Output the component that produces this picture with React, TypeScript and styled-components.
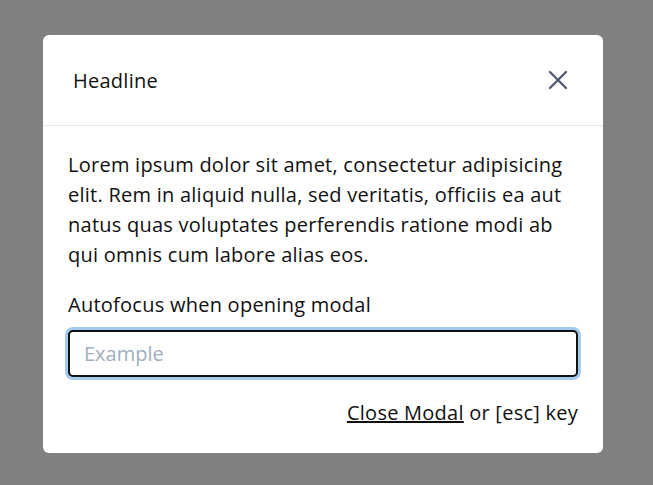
import React from "react";
import styled, { createGlobalStyle } from "styled-components";

const Global = createGlobalStyle`
  html, body { margin: 0; padding: 0; }
  body {
    background: #808080;
    font-family: "Open Sans", "Noto Sans", sans-serif;
    color: #111;
  }
  * { box-sizing: border-box; }
`;

const Backdrop = styled.div`
  min-height: 100vh;
  display: flex;
  align-items: flex-start;
  justify-content: flex-start;
  padding: 35px 0 0 43px;
`;

const Dialog = styled.div`
  width: 560px;
  background: #fff;
  border-radius: 6px;
  display: flex;
  flex-direction: column;
`;

const Header = styled.div`
  height: 91px;
  display: flex;
  align-items: center;
  justify-content: space-between;
  padding: 0 34px 0 30px;
  border-bottom: 1px solid #e2e8f0;
`;

const Title = styled.h2`
  margin: 0;
  font-size: 20px;
  letter-spacing: 0.25px;
  font-weight: 400;
  color: #111;
`;

const CloseButton = styled.button`
  border: none;
  background: none;
  padding: 0;
  width: 22px;
  height: 22px;
  display: flex;
  align-items: center;
  justify-content: center;
  color: #4a5568;
  cursor: pointer;
`;

const Body = styled.div`
  padding: 24px 25px 25px 25px;
  display: flex;
  flex-direction: column;
`;

const Text = styled.p`
  margin: 0 0 20px;
  font-size: 20px;
  line-height: 30px;
  letter-spacing: 0.25px;
`;

const Label = styled.label`
  font-size: 20px;
  line-height: 30px;
  letter-spacing: 0.25px;
  margin-bottom: 10px;
`;

const Input = styled.input`
  width: 100%;
  height: 47px;
  border: 2px solid #111;
  border-radius: 5px;
  padding: 0 14px;
  font-family: inherit;
  font-size: 20px;
  color: #111;
  outline: none;
  box-shadow: 0 0 0 3px #a4cbef;
  &::placeholder { color: #a0aec0; }
`;

const Footer = styled.div`
  margin-top: 21px;
  text-align: right;
  font-size: 20px;
  line-height: 30px;
  letter-spacing: 0.25px;
`;

const CloseLink = styled.a`
  color: #111;
  text-decoration: underline;
  cursor: pointer;
`;

export default function App() {
  return (
    <>
      <Global />
      <Backdrop>
        <Dialog role="dialog" aria-labelledby="modal-title">
          <Header>
            <Title id="modal-title">Headline</Title>
            <CloseButton aria-label="Close">
              <svg width="20" height="20" viewBox="0 0 20 20" fill="none" stroke="currentColor" strokeWidth="2.2" strokeLinecap="round">
                <path d="M2 2 L18 18 M18 2 L2 18" />
              </svg>
            </CloseButton>
          </Header>
          <Body>
            <Text>
              Lorem ipsum dolor sit amet, consectetur adipisicing elit. Rem in aliquid nulla, sed veritatis, officiis ea aut natus quas voluptates perferendis ratione modi ab qui omnis cum labore alias eos.
            </Text>
            <Label htmlFor="autofocus-input">Autofocus when opening modal</Label>
            <Input id="autofocus-input" placeholder="Example" autoFocus />
            <Footer>
              <CloseLink>Close Modal</CloseLink> or [esc] key
            </Footer>
          </Body>
        </Dialog>
      </Backdrop>
    </>
  );
}
